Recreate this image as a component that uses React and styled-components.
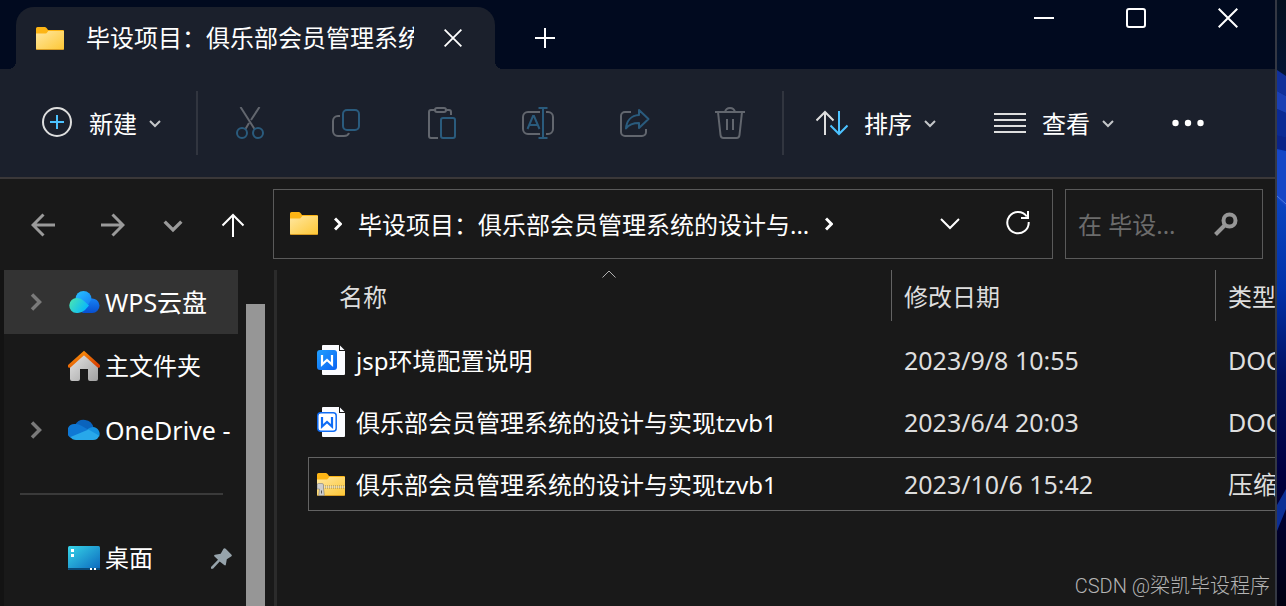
import React from 'react';
import styled, { createGlobalStyle } from 'styled-components';

const palette = {
  title: '#010a1f',
  bar: '#1b202c',
  body: '#191919',
  hover: '#333333',
  line: '#5a5a5a',
  divider: '#2b2b2b',
  muted: '#62666e',
  mutedBlue: '#2a5b7d',
  accent: '#4cc2ff',
  icon: '#dedede',
  text: '#ffffff',
};

const GlobalStyle = createGlobalStyle`
  * {
    box-sizing: border-box;
  }

  body {
    margin: 0;
    overflow: hidden;
    background: ${palette.body};
    color: ${palette.text};
    font-family: 'Noto Sans', 'Noto Sans CJK SC', sans-serif;
    font-size: 24px;
    line-height: 32px;
  }

  button,
  input {
    padding: 0;
    border: none;
    background: none;
    color: inherit;
    font: inherit;
  }

  svg {
    display: block;
    flex-shrink: 0;
  }
`;

const Desktop = styled.div`
  display: flex;
  position: relative;
  min-height: 100vh;
`;

const Window = styled.div`
  display: flex;
  flex: 1;
  flex-direction: column;
  min-width: 0;
  border-right: 2px solid #343843;
`;

const Wallpaper = styled.svg`
  width: 9px;
  height: 100vh;
`;

const TitleBar = styled.header`
  display: flex;
  align-items: flex-start;
  height: 69px;
  padding: 0 1px 0 16px;
  background: ${palette.title};
`;

const Tab = styled.div`
  display: flex;
  align-items: center;
  position: relative;
  width: 479px;
  height: 62px;
  margin-top: 7px;
  padding: 0 22px 0 20px;
  border-radius: 18px 18px 0 0;
  background: ${palette.bar};

  &::before,
  &::after {
    content: '';
    position: absolute;
    bottom: 0;
    width: 8px;
    height: 8px;
  }

  &::before {
    right: 100%;
    background: radial-gradient(circle at 0 0, transparent 8px, ${palette.bar} 8px);
  }

  &::after {
    left: 100%;
    background: radial-gradient(circle at 100% 0, transparent 8px, ${palette.bar} 8px);
  }
`;

const TabTitle = styled.span`
  flex: 1;
  margin: 0 19px 0 22px;
  overflow: hidden;
  white-space: nowrap;
`;

const TabButton = styled.button`
  display: grid;
  place-items: center;
  width: 40px;
  height: 40px;
`;

const NewTabButton = styled(TabButton)`
  margin: 18px auto 0 30px;
`;

const WindowButton = styled.button`
  display: grid;
  place-items: center;
  width: 92px;
  height: 36px;
`;

const CommandBar = styled.div`
  display: flex;
  align-items: center;
  height: 110px;
  padding-left: 41px;
  border-bottom: 2px solid #3b3839;
  background: ${palette.bar};
`;

const CommandButton = styled.button`
  display: flex;
  align-items: center;
  gap: 12px;
  margin-right: ${({ $after }) => $after || 0}px;
  white-space: nowrap;

  svg:first-child {
    margin-right: 4px;
  }
`;

const Label = styled.span`
  padding-top: 2px;
`;

const IconButton = styled.button`
  display: grid;
  place-items: center;
  width: 96px;
  height: 64px;
`;

const MoreButton = styled.button`
  display: grid;
  place-items: center;
`;

const CommandDivider = styled.div`
  width: 2px;
  height: 64px;
  margin: 0 ${({ $right }) => $right}px 0 ${({ $left }) => $left}px;
  background: #31353f;
`;

const NavBar = styled.nav`
  display: flex;
  align-items: center;
  height: 91px;
  padding: 0 12px 2px 8px;
`;

const NavButton = styled.button`
  display: grid;
  place-items: center;
  width: ${({ $narrow }) => ($narrow ? 50 : 70)}px;
  height: 64px;
  padding-top: 2px;
  color: ${({ $active }) => ($active ? palette.text : '#9a9a9a')};
`;

const AddressBar = styled.div`
  display: flex;
  flex: 1;
  align-items: center;
  gap: 16px;
  min-width: 0;
  height: 70px;
  margin: 0 12px 0 5px;
  padding-left: 16px;
  border: 1px solid ${palette.line};
`;

const Crumb = styled.a`
  padding-top: 2px;
  overflow: hidden;
  color: inherit;
  text-decoration: none;
  text-overflow: ellipsis;
  white-space: nowrap;
`;

const AddressActions = styled.div`
  display: flex;
  margin-left: auto;
`;

const AddressButton = styled.button`
  display: grid;
  place-items: center;
  width: 68px;
  height: 68px;
`;

const SearchBox = styled.label`
  display: flex;
  align-items: center;
  width: 198px;
  height: 70px;
  padding: 0 24px 0 12px;
  border: 1px solid ${palette.line};
`;

const SearchInput = styled.input`
  flex: 1;
  min-width: 0;
  padding-top: 2px;
  outline: none;

  &::placeholder {
    color: #6c6c6c;
    opacity: 1;
  }
`;

const Content = styled.div`
  display: flex;
  flex: 1;
`;

const Sidebar = styled.aside`
  width: 238px;
  border-left: 4px solid #131313;
`;

const SidebarItem = styled.a`
  display: flex;
  align-items: center;
  height: 64px;
  padding: 0 6px 0 26px;
  background: ${({ $active }) => ($active ? palette.hover : 'transparent')};
  color: inherit;
  text-decoration: none;
  white-space: nowrap;
`;

const Expander = styled.span`
  width: 12px;
  margin-right: 26px;
`;

const SidebarLabel = styled.span`
  flex: 1;
  margin-left: 5px;
  overflow: hidden;
  font-size: ${({ $cloud }) => ($cloud ? 25 : 24)}px;
`;

const SidebarDivider = styled.hr`
  height: 2px;
  margin: 31px 15px 31px 16px;
  border: none;
  background: #3a3a3a;
`;

const ScrollTrack = styled.div`
  display: flex;
  width: 39px;
  padding: 34px 9px 0 8px;
  border-right: 3px solid ${palette.divider};
`;

const ScrollThumb = styled.div`
  flex: 1;
  background: #969696;
`;

const FileArea = styled.main`
  flex: 1;
  min-width: 0;
  padding-left: 31px;
  overflow: hidden;
`;

const FileTable = styled.table`
  width: 100%;
  border-collapse: collapse;
  table-layout: fixed;
  white-space: nowrap;

  th,
  td {
    padding: 0;
    overflow: hidden;
    font-weight: normal;
    text-align: left;
  }

  th {
    height: 60px;
    vertical-align: top;
  }
`;

const NameCol = styled.col``;

const DateCol = styled.col`
  width: 324px;
`;

const TypeCol = styled.col`
  width: 60px;
`;

const HeadCell = styled.div`
  position: relative;
  height: 51px;
  margin-left: ${({ $first }) => ($first ? 18 : 0)}px;
  padding: 11px 0 0 12px;
  border-left: 1px solid ${({ $first }) => ($first ? 'transparent' : '#636363')};
  color: ${palette.icon};
`;

const SortMark = styled.svg`
  position: absolute;
  top: 0;
  left: 50%;
  margin-left: -7px;
`;

const Cell = styled.div`
  display: flex;
  align-items: center;
  height: 54px;
  margin: 3px 0 5px;
  padding-left: 13px;
  border: solid ${({ $selected }) => ($selected ? '#636363' : 'transparent')};
  border-width: 1px 0;
  color: ${palette.icon};
  font-size: 25px;
`;

const NameCell = styled(Cell)`
  gap: 11px;
  padding-left: 8px;
  border-left-width: 1px;
  color: ${palette.text};
  font-size: 24px;
`;

const Watermark = styled.div`
  position: absolute;
  right: 16px;
  bottom: 4px;
  color: #b4b4b4;
  font-family: Roboto, 'Noto Sans CJK SC', sans-serif;
  font-size: 20px;
  font-weight: 300;
`;

const Chevron = ({ size = 12, dir = 'down', color = 'currentColor', width = 2 }) => {
  const paths = {
    down: 'M1 4l5 5 5-5',
    right: 'M3.5 1l5 5-5 5',
  };
  return (
    <svg width={size} height={size} viewBox="0 0 12 12" fill="none" stroke={color} strokeWidth={width}>
      <path d={paths[dir]} />
    </svg>
  );
};

const Glyph = ({ children, stroke = palette.muted }) => (
  <svg width="32" height="32" viewBox="0 0 32 32" fill="none" stroke={stroke} strokeWidth="2">
    {children}
  </svg>
);

const CloseGlyph = ({ size }) => (
  <svg width={size} height={size} viewBox="0 0 20 20" fill="none" stroke="#fff" strokeWidth="2">
    <path d="M.7.7l18.6 18.6M19.3.7L.7 19.3" />
  </svg>
);

const FolderIcon = ({ zip }) => (
  <svg width="28" height="23" viewBox="0 0 28 23">
    <defs>
      <linearGradient id="folder" x1="0" y1="0" x2="1" y2="1">
        <stop offset="0" stopColor="#ffe7a0" />
        <stop offset="1" stopColor="#fdc735" />
      </linearGradient>
    </defs>
    <path d="M0 1.5Q0 0 1.5 0H9q1 0 2 1.5L12 3h15q1 0 1 1v6H0z" fill="#fdb515" />
    <path d="M0 6.5h9.5q1 0 2-1.5l.8-1H28v17.5q0 1.200-1 1.200H1q-1 0-1-1.200z" fill="url(#folder)" />
    <path d="M.5 22.500h27" stroke="#d79b22" />
    {zip && (
      <>
        <path d="M6 14h22" stroke="#8f8058" strokeWidth="3" strokeDasharray="1 1" />
        <path d="M6 14h22" stroke="#f3ecd2" />
        <path d="M0 12q0-1.500 1.500-1.500H5q1.500 0 1.500 1.500v3l.8 7.500H1.700L2.500 16H0z" fill="#cdcdcd" stroke="#7d7d7d" strokeWidth=".6" />
        <path d="M4.500 17.500v3" stroke="#555" />
      </>
    )}
  </svg>
);

const WpsDocIcon = ({ outlined }) => (
  <svg width="28" height="32" viewBox="0 0 28 32">
    <defs>
      <linearGradient id="wps" x1="0" y1="0" x2="1" y2="1">
        <stop offset="0" stopColor="#20a0ff" />
        <stop offset="1" stopColor="#0a62f2" />
      </linearGradient>
    </defs>
    <path d="M6 1h16v6h6v23q0 1-1 1H6q-1 0-1-1V2q0-1 1-1z" fill="#fbfcff" />
    <path d="M23 1.500L27.500 6H23z" fill="#fbfcff" />
    <rect
      x={outlined ? 0.8 : 0}
      y={outlined ? 6.8 : 6}
      width={outlined ? 18.4 : 20}
      height={outlined ? 18.4 : 20}
      rx="3"
      fill={outlined ? '#fff' : 'url(#wps)'}
      stroke={outlined ? '#0f6cf5' : 'none'}
      strokeWidth="1.5"
    />
    <path
      d="M5 11v9.500l5-4.500 5 4.500V11"
      fill="none"
      stroke={outlined ? '#0f6cf5' : '#fff'}
      strokeWidth="2.2"
    />
  </svg>
);

const WpsCloudIcon = () => (
  <svg width="32" height="32" viewBox="0 0 32 32">
    <defs>
      <linearGradient id="cloud-left" x1="0" y1="0" x2="1" y2=".5">
        <stop offset="0" stopColor="#4de8ae" />
        <stop offset="1" stopColor="#08b8fb" />
      </linearGradient>
      <linearGradient id="cloud-top" x1="0" y1="0" x2="1" y2="1">
        <stop offset="0" stopColor="#28c4ff" />
        <stop offset="1" stopColor="#1580f5" />
      </linearGradient>
      <linearGradient id="cloud-right" x1="0" y1="0" x2="0" y2="1">
        <stop offset="0" stopColor="#1682f5" />
        <stop offset="1" stopColor="#084fd0" />
      </linearGradient>
    </defs>
    <path d="M14 27l9-14.500a7.300 7.300 0 1 1 1 14.500z" fill="url(#cloud-right)" />
    <path d="M7.500 13a8 8 0 0 1 16 0L20 19z" fill="url(#cloud-top)" />
    <path d="M9 12q4 0 7 3l5 4.500-4 4.500q-3 3-7 3H8.500A7.500 7.500 0 0 1 9 12z" fill="url(#cloud-left)" />
  </svg>
);

const HomeIcon = () => (
  <svg width="32" height="32" viewBox="0 0 32 32">
    <defs>
      <linearGradient id="wall" x1="0" y1="0" x2="1" y2="1">
        <stop offset="0" stopColor="#e6e6e6" />
        <stop offset="1" stopColor="#a0a0a0" />
      </linearGradient>
      <linearGradient id="roof" x1="0" y1="0" x2="1" y2="1">
        <stop offset="0" stopColor="#fb9a0c" />
        <stop offset="1" stopColor="#d83b01" />
      </linearGradient>
    </defs>
    <path d="M2 16L16 4l14 12v13q0 2-2 2h-6q-2 0-2-2V19h-8v10q0 2-2 2H4q-2 0-2-2z" fill="url(#wall)" />
    <path d="M1.500 16L16 3l14.500 13" fill="none" stroke="url(#roof)" strokeWidth="3.5" strokeLinecap="round" />
  </svg>
);

const OneDriveIcon = () => (
  <svg width="32" height="32" viewBox="0 0 32 32">
    <path d="M7 11a10 10 0 0 1 18.500 2.500L20 18z" fill="#0a63bd" />
    <path d="M7.500 10q3-.2 5.500 1.500L21 16 3 24A7.500 7.500 0 0 1 7.500 10z" fill="#0f78d4" />
    <path d="M19 15.500q3-2.500 6-2.500a7 7 0 0 1 6 10z" fill="#1490df" />
    <path d="M2.500 23L20.500 15.500 31 21.500q-1 4.500-6 4.500H8q-4 0-5.500-3z" fill="#28a8ea" />
  </svg>
);

const DesktopIcon = () => (
  <svg width="32" height="32" viewBox="0 0 32 32">
    <defs>
      <linearGradient id="desk" x1="0" y1="0" x2="1" y2="1">
        <stop offset="0" stopColor="#37d5e8" />
        <stop offset="1" stopColor="#0b66bd" />
      </linearGradient>
    </defs>
    <rect y="4" width="32" height="24" rx="1.5" fill="url(#desk)" />
    <path d="M0 26h32v.5q0 1.500-1.500 1.500h-29Q0 28 0 26.500z" fill="#0a4a78" />
    <path d="M3 7h3v3H3zM3 12h3v3H3zM22 26h2v2h-2zM26 26h2v2h-2z" fill="#fff" />
  </svg>
);

const PinIcon = () => (
  <svg width="21" height="21" viewBox="0 0 21 21" fill="#96a3ab">
    <path d="M12.500.8q1-1.200 2.200 0l5.600 5.600q1.200 1.200-.2 2.200l-4.300 2.700-.9 5.200q-.5 1.600-1.700.5L8.700 13.500 2 20.800H0V19l7-7.200-3.500-3.400q-1-1.200.6-1.700l5.600-1z" />
  </svg>
);

const sidebarItems = [
  { label: 'WPS云盘', icon: <WpsCloudIcon />, cloud: true, active: true },
  { label: '主文件夹', icon: <HomeIcon /> },
  { label: 'OneDrive -', icon: <OneDriveIcon />, cloud: true },
];

const files = [
  { name: 'jsp环境配置说明', date: '2023/9/8 10:55', type: 'DOCX', icon: <WpsDocIcon /> },
  {
    name: '俱乐部会员管理系统的设计与实现tzvb1',
    date: '2023/6/4 20:03',
    type: 'DOC',
    icon: <WpsDocIcon outlined />,
  },
  {
    name: '俱乐部会员管理系统的设计与实现tzvb1',
    date: '2023/10/6 15:42',
    type: '压缩',
    icon: <FolderIcon zip />,
    selected: true,
  },
];

const WindowTitleBar = () => (
  <TitleBar>
    <Tab>
      <FolderIcon />
      <TabTitle>毕设项目：俱乐部会员管理系统</TabTitle>
      <TabButton aria-label="关闭标签页">
        <CloseGlyph size={18} />
      </TabButton>
    </Tab>
    <NewTabButton aria-label="新标签页">
      <svg width="20" height="20" viewBox="0 0 20 20" stroke="#fff" strokeWidth="2">
        <path d="M10 0v20M0 10h20" />
      </svg>
    </NewTabButton>
    <WindowButton aria-label="最小化">
      <svg width="20" height="20" viewBox="0 0 20 20" stroke="#fff" strokeWidth="2">
        <path d="M0 10h20" />
      </svg>
    </WindowButton>
    <WindowButton aria-label="最大化">
      <svg width="20" height="20" viewBox="0 0 20 20" fill="none" stroke="#fff" strokeWidth="2">
        <rect x="1" y="1" width="18" height="18" rx="2" />
      </svg>
    </WindowButton>
    <WindowButton aria-label="关闭">
      <CloseGlyph size={20} />
    </WindowButton>
  </TitleBar>
);

const Commands = () => (
  <CommandBar>
    <CommandButton>
      <Glyph stroke={palette.icon}>
        <circle cx="16" cy="15" r="14" />
        <path d="M16 8v14M9 15h14" stroke={palette.accent} />
      </Glyph>
      <Label>新建</Label>
      <Chevron color="#c4c6c9" />
    </CommandButton>
    <CommandDivider $left={35} $right={4} />
    <IconButton aria-label="剪切" disabled>
      <Glyph>
        <path d="M6.500 0L20.500 22M25.500 0l-8.500 13M15 16l-3.500 6" />
        <circle cx="8" cy="26" r="5" stroke={palette.mutedBlue} />
        <circle cx="24" cy="26" r="5" stroke={palette.mutedBlue} />
      </Glyph>
    </IconButton>
    <IconButton aria-label="复制" disabled>
      <Glyph>
        <path d="M10 9H8a5 5 0 0 0-5 5v10a5 5 0 0 0 5 5h6q4 0 5-3" />
        <rect x="13" y="3" width="16" height="20" rx="4" stroke={palette.mutedBlue} />
      </Glyph>
    </IconButton>
    <IconButton aria-label="粘贴" disabled>
      <Glyph>
        <path d="M9 3H5a2 2 0 0 0-2 2v24a2 2 0 0 0 2 2h7M20 3h3a2 2 0 0 1 2 2v3" />
        <rect x="9" y="1" width="11" height="4" rx="2" />
        <rect x="15" y="11" width="14" height="20" rx="2" stroke={palette.mutedBlue} />
      </Glyph>
    </IconButton>
    <IconButton aria-label="重命名" disabled>
      <Glyph>
        <path d="M18 5H6a5 5 0 0 0-5 5v12a5 5 0 0 0 5 5h12M24 5h2a5 5 0 0 1 5 5v12a5 5 0 0 1-5 5h-2" />
        <path d="M21 1v30M16.500 1h9M16.500 31h9M5.500 22L11 9h1l5.500 13M7.500 18h8" stroke={palette.mutedBlue} />
      </Glyph>
    </IconButton>
    <IconButton aria-label="共享" disabled>
      <Glyph>
        <path d="M13 5H7a4 4 0 0 0-4 4v16a4 4 0 0 0 4 4h17a4 4 0 0 0 4-4v-3" />
        <path
          d="M21 3l9.500 9-9.500 9v-5c-6 0-10 1.500-13 5.500C8.500 14 13 8.500 21 8z"
          stroke={palette.mutedBlue}
          strokeLinejoin="round"
        />
      </Glyph>
    </IconButton>
    <IconButton aria-label="删除" disabled>
      <Glyph>
        <path d="M1 5h30M11 5q1-4 5-4t5 4M4 5l2.500 23q.3 3 3 3h13q2.700 0 3-3L28 5M13 12v11M19 12v11" />
      </Glyph>
    </IconButton>
    <CommandDivider $left={4} $right={32} />
    <CommandButton $after={58}>
      <Glyph stroke={palette.icon}>
        <path d="M9 5v23M.5 13.500L9 5l8.500 8.500" />
        <path d="M23 4v23M14.500 18.500L23 27l8.500-8.500" stroke={palette.accent} />
      </Glyph>
      <Label>排序</Label>
      <Chevron color="#c4c6c9" />
    </CommandButton>
    <CommandButton $after={58}>
      <Glyph stroke={palette.icon}>
        <path d="M0 7h32M0 13h32M0 19h32M0 25h32" />
      </Glyph>
      <Label>查看</Label>
      <Chevron color="#c4c6c9" />
    </CommandButton>
    <MoreButton aria-label="更多">
      <svg width="32" height="8" viewBox="0 0 32 8" fill="#fff">
        <circle cx="3.5" cy="4" r="3.2" />
        <circle cx="16" cy="4" r="3.2" />
        <circle cx="28.5" cy="4" r="3.2" />
      </svg>
    </MoreButton>
  </CommandBar>
);

const Navigation = () => (
  <NavBar>
    <NavButton aria-label="后退">
      <svg width="24" height="24" viewBox="0 0 24 24" fill="none" stroke="currentColor" strokeWidth="3">
        <path d="M24 12H2M12.500 1.500L2 12l10.500 10.500" />
      </svg>
    </NavButton>
    <NavButton aria-label="前进">
      <svg width="24" height="24" viewBox="0 0 24 24" fill="none" stroke="currentColor" strokeWidth="3">
        <path d="M0 12h22M11.500 1.500L22 12 11.500 22.500" />
      </svg>
    </NavButton>
    <NavButton $narrow aria-label="最近浏览的位置">
      <Chevron size={20} width={2} />
    </NavButton>
    <NavButton $active aria-label="上移">
      <svg width="24" height="24" viewBox="0 0 24 24" fill="none" stroke="currentColor" strokeWidth="2">
        <path d="M12 24V2M1.500 12.500L12 2l10.500 10.500" />
      </svg>
    </NavButton>
    <AddressBar>
      <FolderIcon />
      <svg width="8" height="14" viewBox="0 0 8 14" fill="none" stroke="#fff" strokeWidth="3">
        <path d="M1 1.500L6.500 7 1 12.500" />
      </svg>
      <Crumb href="#">毕设项目：俱乐部会员管理系统的设计与...</Crumb>
      <svg width="8" height="14" viewBox="0 0 8 14" fill="none" stroke="#fff" strokeWidth="3">
        <path d="M1 1.500L6.500 7 1 12.500" />
      </svg>
      <AddressActions>
        <AddressButton aria-label="历史记录">
          <svg width="20" height="12" viewBox="0 0 20 12" fill="none" stroke="#fff" strokeWidth="2">
            <path d="M1 1l9 9 9-9" />
          </svg>
        </AddressButton>
        <AddressButton aria-label="刷新">
          <svg width="24" height="28" viewBox="0 0 24 28" fill="none" stroke="#fff" strokeWidth="2">
            <path d="M20.800 6.500A10.700 10.700 0 1 0 22.700 12M22 1v7h-7" />
          </svg>
        </AddressButton>
      </AddressActions>
    </AddressBar>
    <SearchBox>
      <SearchInput type="text" aria-label="搜索" placeholder="在 毕设..." />
      <svg width="24" height="24" viewBox="0 0 24 24" fill="none" stroke="#969696">
        <circle cx="15.5" cy="8.5" r="6" strokeWidth="4" />
        <path d="M11 13L1.500 22.500" strokeWidth="4" />
      </svg>
    </SearchBox>
  </NavBar>
);

const App = () => {
  return (
    <Desktop>
      <GlobalStyle />
      <Window>
        <WindowTitleBar />
        <Commands />
        <Navigation />
        <Content>
          <Sidebar>
            {sidebarItems.map(({ label, icon, cloud, active }) => (
              <SidebarItem key={label} href="#" $active={active}>
                <Expander>
                  {cloud && (
                    <svg width="12" height="18" viewBox="0 0 12 18" fill="none" stroke="#7a7a7a" strokeWidth="3.5">
                      <path d="M2 1.500L9.500 9 2 16.500" />
                    </svg>
                  )}
                </Expander>
                {icon}
                <SidebarLabel $cloud={cloud}>{label}</SidebarLabel>
              </SidebarItem>
            ))}
            <SidebarDivider />
            <SidebarItem href="#">
              <Expander />
              <DesktopIcon />
              <SidebarLabel>桌面</SidebarLabel>
              <PinIcon />
            </SidebarItem>
          </Sidebar>
          <ScrollTrack>
            <ScrollThumb />
          </ScrollTrack>
          <FileArea>
            <FileTable>
              <colgroup>
                <NameCol />
                <DateCol />
                <TypeCol />
              </colgroup>
              <thead>
                <tr>
                  <th>
                    <HeadCell $first>
                      <SortMark width="14" height="8" viewBox="0 0 14 8" fill="none" stroke="#b0b0b0">
                        <path d="M.5 7.500L7 1l6.500 6.500" />
                      </SortMark>
                      名称
                    </HeadCell>
                  </th>
                  <th>
                    <HeadCell>修改日期</HeadCell>
                  </th>
                  <th>
                    <HeadCell>类型</HeadCell>
                  </th>
                </tr>
              </thead>
              <tbody>
                {files.map(({ name, date, type, icon, selected }) => (
                  <tr key={date}>
                    <td>
                      <NameCell $selected={selected}>
                        {icon}
                        <Label>{name}</Label>
                      </NameCell>
                    </td>
                    <td>
                      <Cell $selected={selected}>{date}</Cell>
                    </td>
                    <td>
                      <Cell $selected={selected}>{type}</Cell>
                    </td>
                  </tr>
                ))}
              </tbody>
            </FileTable>
          </FileArea>
        </Content>
      </Window>
      <Wallpaper viewBox="0 0 9 606" preserveAspectRatio="none">
        <defs>
          <linearGradient id="sky" x1="0" y1="0" x2="0" y2="1">
            <stop offset="0" stopColor="#04101f" />
            <stop offset=".12" stopColor="#031433" />
            <stop offset=".25" stopColor="#1246c8" />
            <stop offset=".33" stopColor="#0a44c0" />
            <stop offset=".48" stopColor="#0030a8" />
            <stop offset=".62" stopColor="#001060" />
            <stop offset=".78" stopColor="#000040" />
            <stop offset="1" stopColor="#000010" />
          </linearGradient>
        </defs>
        <rect width="9" height="606" fill="url(#sky)" />
        <path d="M0 70l9 6v20l-9-5z" fill="#10309a" />
        <path d="M0 91l9 5v17l-9-4z" fill="#1a3fb4" />
        <path d="M0 109l9 4v24l-9-2z" fill="#0b2a94" />
        <path d="M0 135l9 2v14l-9-2z" fill="#0a2388" />
        <path d="M0 150l9 3v54l-9-9z" fill="#1646c6" />
        <path d="M0 196l9 8" stroke="#4a7ee0" />
        <path d="M0 505l9-16v20l-9 22z" fill="#0c2f96" />
      </Wallpaper>
      <Watermark>CSDN @梁凯毕设程序</Watermark>
    </Desktop>
  );
};

export default App;
